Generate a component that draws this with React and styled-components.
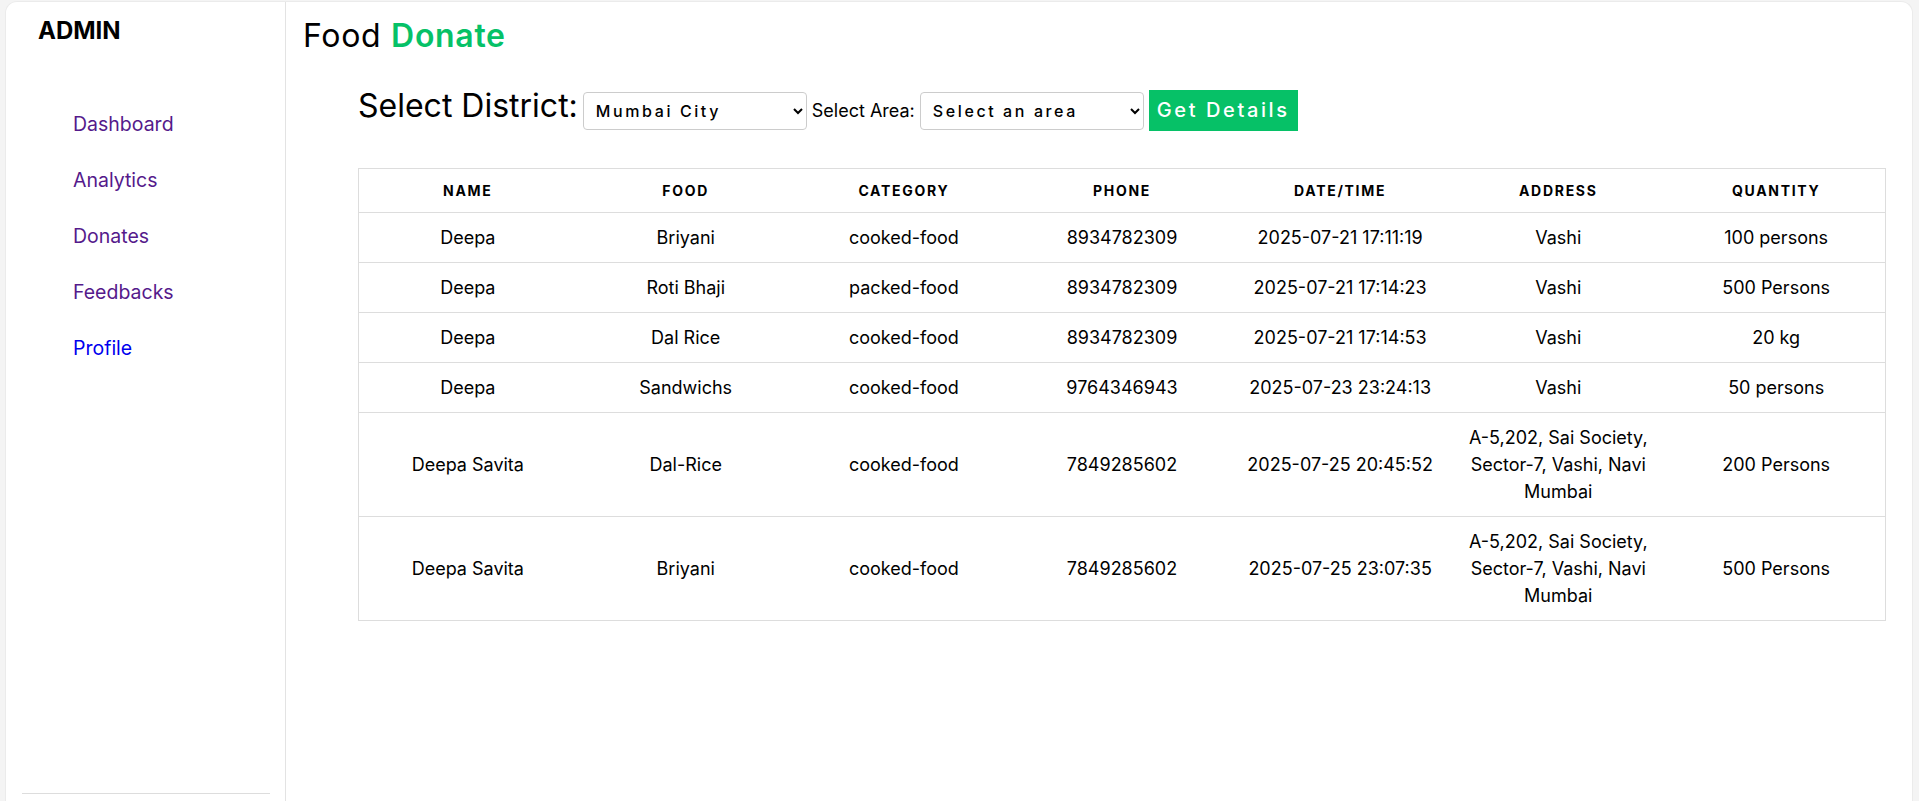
import React from "react";
import styled, { createGlobalStyle } from "styled-components";

const GlobalStyle = createGlobalStyle`
	* {
		box-sizing: border-box;
	}
	html, body {
		margin: 0;
		padding: 0;
		height: 100%;
		overflow: hidden;
		background: #f4f4f4;
		font-family: Inter, "Open Sans", sans-serif;
		color: #000;
	}
`;

const donations = [
	{ name: "Deepa", food: "Briyani", category: "cooked-food", phone: "8934782309", date: "2025-07-21 17:11:19", address: "Vashi", quantity: "100 persons" },
	{ name: "Deepa", food: "Roti Bhaji", category: "packed-food", phone: "8934782309", date: "2025-07-21 17:14:23", address: "Vashi", quantity: "500 Persons" },
	{ name: "Deepa", food: "Dal Rice", category: "cooked-food", phone: "8934782309", date: "2025-07-21 17:14:53", address: "Vashi", quantity: "20 kg" },
	{ name: "Deepa", food: "Sandwichs", category: "cooked-food", phone: "9764346943", date: "2025-07-23 23:24:13", address: "Vashi", quantity: "50 persons" },
	{ name: "Deepa Savita", food: "Dal-Rice", category: "cooked-food", phone: "7849285602", date: "2025-07-25 20:45:52", address: "A-5,202, Sai Society, Sector-7, Vashi, Navi Mumbai", quantity: "200 Persons" },
	{ name: "Deepa Savita", food: "Briyani", category: "cooked-food", phone: "7849285602", date: "2025-07-25 23:07:35", address: "A-5,202, Sai Society, Sector-7, Vashi, Navi Mumbai", quantity: "500 Persons" },
];

const links = [
	{ label: "Dashboard", visited: true },
	{ label: "Analytics", visited: true },
	{ label: "Donates", visited: true },
	{ label: "Feedbacks", visited: true },
	{ label: "Profile", visited: false },
];

const columns = ["Name", "Food", "Category", "Phone", "Date/Time", "Address", "Quantity"];

export default function App() {
	return (
		<>
			<GlobalStyle />
			<Card>
				<Sidebar>
					<Brand>ADMIN</Brand>
					<NavList>
						{links.map((l) => (
							<li key={l.label}>
								<NavLink href="#" $visited={l.visited}>{l.label}</NavLink>
							</li>
						))}
					</NavList>
					<Divider />
				</Sidebar>

				<Main>
					<Title>
						Food <Green>Donate</Green>
					</Title>

					<Content>
						<FilterRow>
							<BigLabel>Select District:</BigLabel>
							<Select defaultValue="mumbai">
								<option value="mumbai">Mumbai City</option>
							</Select>
							<SmallLabel>Select Area:</SmallLabel>
							<Select defaultValue="">
								<option value="">Select an area</option>
							</Select>
							<Button>Get Details</Button>
						</FilterRow>

						<Table>
							<thead>
								<tr>
									{columns.map((c) => (
										<Th key={c}>{c}</Th>
									))}
								</tr>
							</thead>
							<tbody>
								{donations.map((d, i) => (
									<tr key={i}>
										<Td>{d.name}</Td>
										<Td>{d.food}</Td>
										<Td>{d.category}</Td>
										<Td>{d.phone}</Td>
										<Td>{d.date}</Td>
										<Td>{d.address}</Td>
										<Td>{d.quantity}</Td>
									</tr>
								))}
							</tbody>
						</Table>
					</Content>
				</Main>
			</Card>
		</>
	);
}

const Card = styled.div`
	margin: 1px 6px 0 5px;
	height: calc(100vh - 1px);
	background: #fff;
	border: 1px solid #ebebeb;
	border-bottom: none;
	border-radius: 12px 12px 0 0;
	display: flex;
	overflow: hidden;
`;

const Sidebar = styled.aside`
	width: 280px;
	flex-shrink: 0;
	border-right: 1px solid #e3e3e3;
	display: flex;
	flex-direction: column;
	padding: 15px 15px 7px 16px;
`;

const Brand = styled.div`
	font-size: 24px;
	font-weight: 700;
	line-height: 1.2;
	padding-left: 16px;
`;

const NavList = styled.ul`
	list-style: none;
	margin: 64px 0 0;
	padding: 0 0 0 51px;
	display: flex;
	flex-direction: column;
	gap: 28px;
`;

const NavLink = styled.a`
	display: block;
	font-size: 19.5px;
	line-height: 28px;
	text-decoration: none;
	color: ${({ $visited }) => ($visited ? "#551A8B" : "#0000EE")};
`;

const Divider = styled.div`
	margin-top: auto;
	height: 1px;
	background: #dddddd;
`;

const Main = styled.main`
	flex: 1;
	padding: 15px 26px 0 17px;
`;

const Title = styled.h1`
	margin: 0;
	font-size: 32px;
	font-weight: 400;
	line-height: 1.2;
	letter-spacing: 0.7px;
`;

const Green = styled.span`
	color: #06c167;
	font-weight: 600;
`;

const Content = styled.div`
	padding-left: 55px;
`;

const FilterRow = styled.div`
	display: flex;
	align-items: baseline;
	gap: 5px;
	margin-top: 32px;
`;

const BigLabel = styled.span`
	font-size: 32px;
	line-height: 1.2;
`;

const SmallLabel = styled.span`
	font-size: 18px;
`;

const Select = styled.select`
	width: 224px;
	height: 38px;
	padding: 0 6px 0 8px;
	border: 1px solid #cccccc;
	border-radius: 4px;
	background: #fff;
	font-family: Inter, sans-serif;
	font-size: 16px;
	font-weight: 500;
	letter-spacing: 2.6px;
	color: #000;
`;

const Button = styled.button`
	height: 41px;
	padding: 0 8px;
	border: none;
	background: #06c167;
	color: #fff;
	font-family: Inter, sans-serif;
	font-size: 20px;
	font-weight: 500;
	letter-spacing: 2.6px;
`;

const Table = styled.table`
	width: 100%;
	margin-top: 37px;
	border-collapse: collapse;
	table-layout: fixed;
	border: 1px solid #dddddd;
`;

const Th = styled.th`
	padding: 11px 12px;
	font-size: 14px;
	font-weight: 700;
	line-height: 21px;
	letter-spacing: 1.7px;
	text-transform: uppercase;
	text-align: center;
	border-bottom: 1px solid #dddddd;
`;

const Td = styled.td`
	padding: 11px 12px;
	font-size: 18px;
	line-height: 27px;
	text-align: center;
	border-bottom: 1px solid #dddddd;
`;
